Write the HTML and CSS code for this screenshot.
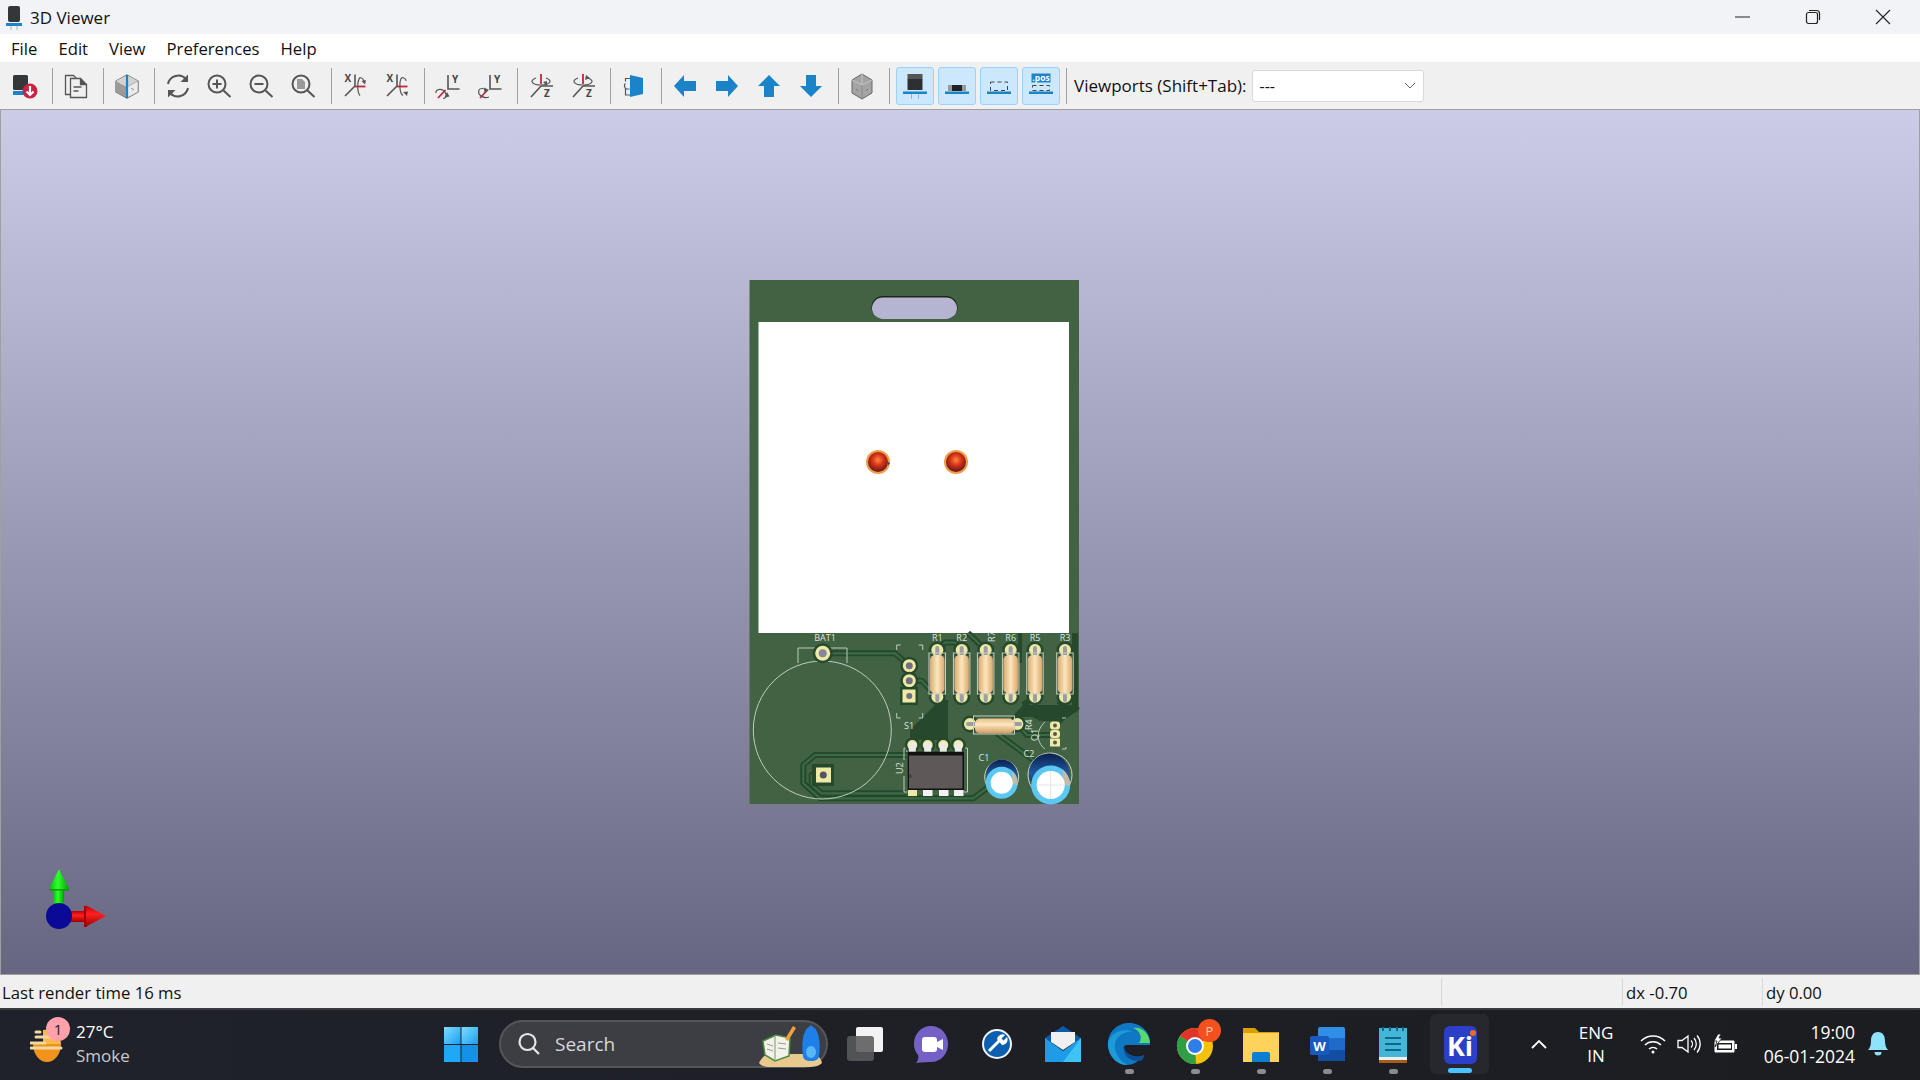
FILE: index.html
```html
<!DOCTYPE html>
<html lang="en">
<head>
<meta charset="utf-8">
<title>3D Viewer</title>
<link rel="stylesheet" href="styles.css">
</head>
<body>
<div class="window">
  <header class="titlebar">
    <svg class="app-icon" width="18" height="26" viewBox="0 0 18 26"><rect x="3" y="2" width="12" height="16" rx="2" fill="#33373a"/><rect x="1" y="19" width="16" height="3" fill="#1b83c8"/><path d="M6 22v4M12 22v4" stroke="#c5c8cc" stroke-width="1.5"/></svg>
    <span class="app-title">3D Viewer</span>
    <div class="win-controls">
      <div class="win-btn"><svg width="16" height="16" viewBox="0 0 16 16"><path d="M0 8h15" stroke="#222" stroke-width="1"/></svg></div>
      <div class="win-btn"><svg width="16" height="16" viewBox="0 0 16 16" fill="none" stroke="#222" stroke-width="1.2"><rect x="1.5" y="3.5" width="11" height="11" rx="2"/><path d="M4 1.5h7.5a3 3 0 0 1 3 3V11"/></svg></div>
      <div class="win-btn"><svg width="16" height="16" viewBox="0 0 16 16"><path d="M1 1l14 14M15 1L1 15" stroke="#222" stroke-width="1.1"/></svg></div>
    </div>
  </header>

  <nav class="menubar">
    <span>File</span><span>Edit</span><span>View</span><span>Preferences</span><span>Help</span>
  </nav>

  <div class="toolbar">
    <div class="tool"><svg class="ic" viewBox="0 0 28 28"><rect x="2" y="3" width="15" height="15" rx="1.5" fill="#33373a"/><rect x="2" y="19" width="17" height="4" fill="#1b83c8"/><circle cx="19" cy="19" r="7.5" fill="#c8233f"/><path d="M19 14v9M15.5 19.5L19 23l3.5-3.5" fill="none" stroke="#fff" stroke-width="2.2"/></svg></div>
    <i class="sep"></i>
    <div class="tool"><svg class="ic" viewBox="0 0 28 28" fill="none" stroke="#555" stroke-width="1.3"><path d="M8.5 22.5H3.5v-19h8l3 3"/><path d="M8.5 6.5h10l6 6v13h-16z" fill="#f0f0f0"/><path d="M18.5 6.5v6h6" fill="#555"/><path d="M11.5 15h8M11.5 19h5"/></svg></div>
    <i class="sep"></i>
    <div class="tool"><svg class="ic" viewBox="0 0 28 28"><path d="M14 3l11 6v11l-11 6-11-6V9z" fill="#f0f0f0" stroke="#666" stroke-width="1.2"/><path d="M3 9l11 6v11l-11-6z" fill="#9b9b9b"/><path d="M14 3L3 9l11 6 11-6z" fill="#d2d2d2"/><path d="M14 15l11-6v11l-11 6z" fill="#ececec" stroke="#888" stroke-width=".6"/><path d="M14 3v23" stroke="#1b83c8" stroke-width="2.2"/><path d="M18 16l3 2" stroke="#888"/></svg></div>
    <i class="sep"></i>
    <div class="tool"><svg class="ic" viewBox="0 0 28 28" fill="none" stroke="#555" stroke-width="2"><path d="M4 12A10.5 10.5 0 0 1 22 7"/><path d="M24 16A10.5 10.5 0 0 1 6 21"/><path d="M24 2.5v7.5h-7.5z" fill="#555" stroke="none"/><path d="M4 25.5V18h7.5z" fill="#555" stroke="none"/></svg></div>
    <div class="tool"><svg class="ic" viewBox="0 0 28 28" fill="none" stroke="#555" stroke-width="2"><circle cx="11" cy="12" r="8.5"/><path d="M17.5 18.5l7 6.5M11 7.5v9M6.5 12h9"/></svg></div>
    <div class="tool"><svg class="ic" viewBox="0 0 28 28" fill="none" stroke="#555" stroke-width="2"><circle cx="11" cy="12" r="8.5"/><path d="M17.5 18.5l7 6.5M6.5 12h9"/></svg></div>
    <div class="tool"><svg class="ic" viewBox="0 0 28 28" fill="none" stroke="#555" stroke-width="2"><circle cx="11" cy="12" r="8.5"/><path d="M17.5 18.5l7 6.5"/><path d="M7 7h5l3 3v7H7z" fill="#999" stroke="none"/></svg></div>
    <i class="sep"></i>
    <div class="tool"><svg class="ic" viewBox="0 0 28 28"><path d="M14 14V2.5M14 14L4 24" fill="none" stroke="#555" stroke-width="1.6"/><path d="M14 14.5h10.5" stroke="#c8233f" stroke-width="1.8"/><text x="3.5" y="10" class="axis">X</text><path d="M19 5.5C16 9 16 20 19 23.5" fill="none" stroke="#555" stroke-width="1.2"/><path d="M19 5.5C22 6 23 9 23 11" fill="none" stroke="#555" stroke-width="1.2"/><path d="M20.5 9l4.5-1-1 4.5z" fill="#555"/></svg></div>
    <div class="tool"><svg class="ic" viewBox="0 0 28 28"><path d="M14 14V2.5M14 14L4 24" fill="none" stroke="#555" stroke-width="1.6"/><path d="M14 14.5h10.5" stroke="#c8233f" stroke-width="1.8"/><text x="3.5" y="10" class="axis">X</text><path d="M20 23.5C16 21 16 8 19 5.5" fill="none" stroke="#555" stroke-width="1.2"/><path d="M19 5.5C22 6 23 8 23 9" fill="none" stroke="#555" stroke-width="1.2"/><path d="M20 20l5-.5-1 4.5z" fill="#555"/></svg></div>
    <i class="sep"></i>
    <div class="tool"><svg class="ic" viewBox="0 0 28 28"><path d="M14 3v14h11.5" fill="none" stroke="#555" stroke-width="1.6"/><path d="M11.5 18L4 26" stroke="#c8233f" stroke-width="1.8"/><text x="18" y="11" class="axis">Y</text><path d="M2 21C1 17 9 15 12 22c1 3-1 4.5-3 4.5" fill="none" stroke="#555" stroke-width="1.2"/><path d="M13 20l2.5 4.5-5 1z" fill="#555"/></svg></div>
    <div class="tool"><svg class="ic" viewBox="0 0 28 28"><path d="M14 3v14h11.5" fill="none" stroke="#555" stroke-width="1.6"/><path d="M11.5 18L4 26" stroke="#c8233f" stroke-width="1.8"/><text x="18" y="11" class="axis">Y</text><path d="M13 25C8 27 1 23 3 18c1-2 5-2 7 0" fill="none" stroke="#555" stroke-width="1.2"/><path d="M8 15.5l5 2.5-4.500 3z" fill="#555"/></svg></div>
    <i class="sep"></i>
    <div class="tool"><svg class="ic" viewBox="0 0 28 28"><path d="M14 14h12M14 14L4 25" fill="none" stroke="#555" stroke-width="1.6"/><path d="M14 2v10" stroke="#c8233f" stroke-width="1.8"/><text x="17" y="25" class="axis">Z</text><path d="M9 6c-8 3-3 7 5 7s13-4 5-7" fill="none" stroke="#555" stroke-width="1.2"/><path d="M16 10l4-1 0 5z" fill="#555"/></svg></div>
    <div class="tool"><svg class="ic" viewBox="0 0 28 28"><path d="M14 14h12M14 14L4 25" fill="none" stroke="#555" stroke-width="1.6"/><path d="M14 2v10" stroke="#c8233f" stroke-width="1.8"/><text x="17" y="25" class="axis">Z</text><path d="M9 6c-8 3-3 7 5 7s13-4 5-7" fill="none" stroke="#555" stroke-width="1.2"/><path d="M17 3l4 3-5 2z" fill="#555"/></svg></div>
    <i class="sep"></i>
    <div class="tool"><svg class="ic" viewBox="0 0 28 28"><path d="M10 6.5H5.500v3M5.500 17v6H10M5.500 11.500c-2 1-1 5 1 5.500h3" fill="none" stroke="#555" stroke-width="1.2"/><path d="M10 3l13 3v16l-13 3z" fill="#1b83c8"/></svg></div>
    <i class="sep"></i>
    <div class="tool"><svg class="ic" viewBox="0 0 28 28"><path class="arrow" d="M3 14L13 3v6h12v10H13v6z"/></svg></div>
    <div class="tool"><svg class="ic" viewBox="0 0 28 28"><path class="arrow" d="M25 14L15 3v6H3v10h12v6z"/></svg></div>
    <div class="tool"><svg class="ic" viewBox="0 0 28 28"><path class="arrow" d="M14 3L3 14h6v11h10V14h6z"/></svg></div>
    <div class="tool"><svg class="ic" viewBox="0 0 28 28"><path class="arrow" d="M14 25L3 14h6V3h10v11h6z"/></svg></div>
    <i class="sep"></i>
    <div class="tool"><svg class="ic" viewBox="0 0 28 28"><path d="M14 2l10 6v13l-10 6-10-6V8z" fill="#a4a4a4" stroke="#666" stroke-width="1"/><path d="M14 2v11M4 8l10 5 10-5" fill="none" stroke="#c4c4c4" stroke-width="1"/><path d="M14 13v14" stroke="#8a8a8a"/><path d="M8 17l2 2M20 17l-2 2" stroke="#777"/></svg></div>
    <i class="sep"></i>
    <div class="toggles">
      <div class="toggle"><svg class="ic" viewBox="0 0 28 28"><rect x="6.5" y="2" width="15" height="5" fill="#555"/><rect x="6.5" y="7" width="15" height="11" fill="#2d3033"/><rect x="2" y="19.500" width="24" height="2.500" fill="#1b83c8"/><path d="M10.500 22v5M17.500 22v5" stroke="#a8b0b8"/></svg></div>
      <div class="toggle"><svg class="ic" viewBox="0 0 28 28"><rect x="5" y="13" width="18" height="6" fill="#999"/><rect x="9" y="13" width="10" height="6" fill="#222"/><rect x="2" y="19.500" width="24" height="2.500" fill="#1b83c8"/></svg></div>
      <div class="toggle"><svg class="ic" viewBox="0 0 28 28"><rect x="5.500" y="10" width="17" height="8.500" fill="none" stroke="#444" stroke-dasharray="4 3"/><rect x="2" y="19.500" width="24" height="2.500" fill="#1b83c8"/></svg></div>
      <div class="toggle"><svg class="ic" viewBox="0 0 28 28"><rect x="4.500" y="1.500" width="19" height="9" fill="#1b83c8"/><text x="14" y="9" class="pos">.pos</text><rect x="5.500" y="13.500" width="17" height="5" fill="none" stroke="#444" stroke-dasharray="4 3"/><rect x="2" y="19.500" width="24" height="2.500" fill="#1b83c8"/></svg></div>
    </div>
    <i class="sep sep-last"></i>
    <label class="vp-label">Viewports (Shift+Tab):</label>
    <div class="combo"><span>---</span><svg width="12" height="8" viewBox="0 0 12 8"><path d="M1 1l5 5 5-5" fill="none" stroke="#666"/></svg></div>
  </div>

  <main class="viewport">
    <svg class="scene" viewBox="1 110 1918 864" preserveAspectRatio="none">
      <defs>
        <linearGradient id="res-v" x1="0" x2="1" y1="0" y2="0"><stop offset="0" stop-color="#d9aa70"/><stop offset=".5" stop-color="#fce6bd"/><stop offset="1" stop-color="#d8a76c"/></linearGradient>
        <linearGradient id="res-h" x1="0" x2="0" y1="0" y2="1"><stop offset="0" stop-color="#e7c08a"/><stop offset=".4" stop-color="#fce6bd"/><stop offset="1" stop-color="#d09c60"/></linearGradient>
        <radialGradient id="led" cx=".5" cy=".4" r=".62"><stop offset="0" stop-color="#ff8a3a"/><stop offset=".45" stop-color="#d8321a"/><stop offset="1" stop-color="#541816"/></radialGradient>
        <linearGradient id="gy" x1="0" x2="1" y1="0" y2="0"><stop offset="0" stop-color="#00c000"/><stop offset=".45" stop-color="#30ff30"/><stop offset="1" stop-color="#00a000"/></linearGradient>
        <linearGradient id="rx" x1="0" x2="0" y1="0" y2="1"><stop offset="0" stop-color="#c00000"/><stop offset=".4" stop-color="#ff2020"/><stop offset="1" stop-color="#a00000"/></linearGradient>
        <linearGradient id="navy" x1="0" x2="0" y1="0" y2="1"><stop offset="0" stop-color="#0a2150"/><stop offset=".5" stop-color="#2058a0"/><stop offset="1" stop-color="#0a1a40"/></linearGradient>
      </defs>

      <rect x="749.500" y="280" width="329.500" height="524" fill="#416344"/>
      <rect x="871.500" y="296" width="86" height="23" rx="11.500" fill="#1d2410"/>
      <rect x="872" y="297.500" width="85" height="21.500" rx="10.700" fill="#b5b5d1"/>
      <rect x="758.500" y="322" width="310.500" height="311" fill="#fff"/>

      <circle cx="878" cy="462" r="12" fill="#f59a48"/><circle cx="878" cy="462" r="10" fill="url(#led)"/><path d="M887 463.500h3M888.500 462v3" stroke="#555"/>
      <circle cx="956" cy="462" r="12" fill="#f59a48"/><circle cx="956" cy="462" r="10" fill="url(#led)"/>

      <!-- copper zones -->
      <g fill="#26492e">
        <path d="M938 702L910 730v10h33v-38z"/>
        <path d="M1023 705h55v6l-18 10h-20l-8-4h-20z"/>
        <path d="M1072 633h6v72h-6z"/>
        <path d="M1018 633h4v30h-4z"/>
      </g>
      <!-- traces -->
      <g fill="none" stroke="#26492e" stroke-width="6" stroke-linejoin="round">
        <path d="M822.700 653.300H895l14.300 12.400"/>
        <path d="M909.300 680.700h12.400l15.300 16"/>
        <path d="M937 650l8-7.500h10l6.700 7.500"/>
        <path d="M968 633l17.700 17"/>
        <path d="M906.700 755H815l-11.700 10v18.300L820 798.300h153.300l20-15"/>
        <path d="M823.300 775h-11.600v10l10 8.300H906"/>
        <path d="M996.700 733l43.300 32"/>
        <path d="M1017 724l10 11h23"/>
        <path d="M1055 726l7-8 16-12"/>
        <path d="M961.700 697l-6 5M1035 697l-12 8M1065 697l-6 8"/>
        <path d="M945 700v45"/>
      </g>
      <g fill="none" stroke="#3a6b44" stroke-width="2.200" stroke-linejoin="round">
        <path d="M822.700 653.300H895l14.300 12.400"/>
        <path d="M909.300 680.700h12.400l15.300 16"/>
        <path d="M937 650l8-7.500h10l6.700 7.500"/>
        <path d="M968 633l17.700 17"/>
        <path d="M906.700 755H815l-11.700 10v18.300L820 798.300h153.300l20-15"/>
        <path d="M823.300 775h-11.600v10l10 8.300H906"/>
        <path d="M996.700 733l43.300 32"/>
        <path d="M1017 724l10 11h23"/>
      </g>

      <!-- silk -->
      <g class="silk-line">
        <circle cx="822.300" cy="730" r="69"/>
        <path d="M798 663v-15h49v15"/>
        <path d="M896.700 650v-5h4M918.700 645h4v5M896.700 713v5h4M918.700 718h4v-5"/>
        <path d="M907 752v-4h-3v12M904 776v16h3M964 748h3.500v44H964"/>
        <path d="M1045 722c-9 8-9 20 0 27"/>
        <path d="M1062 718h4M1062 749h4v-2"/>
      </g>
      <g class="silk-text">
        <text x="825" y="641" text-anchor="middle">BAT1</text>
        <text x="909" y="729" text-anchor="middle">S1</text>
        <text x="937.300" y="641" text-anchor="middle">R1</text>
        <text x="961.700" y="641" text-anchor="middle">R2</text>
        <text x="1010.700" y="641" text-anchor="middle">R6</text>
        <text x="1035" y="641" text-anchor="middle">R5</text>
        <text x="1065" y="641" text-anchor="middle">R3</text>
        <text x="984" y="761" text-anchor="middle">C1</text>
        <text x="1029" y="756.500" text-anchor="middle">C2</text>
        <text transform="translate(995 642) rotate(-90)">R7</text>
        <text transform="translate(1032 730) rotate(-90)">R4</text>
        <text transform="translate(1038 741) rotate(-90)">Q1</text>
        <text transform="translate(902.500 774) rotate(-90)">U2</text>
      </g>

      <!-- battery pads -->
      <circle cx="822.700" cy="653.300" r="10" fill="#26492e"/><circle cx="822.700" cy="653.300" r="7.500" fill="#efe9a6"/><circle cx="822.700" cy="653.300" r="4" fill="#85859b"/>
      <rect x="812" y="764" width="22" height="22" fill="#26492e"/><rect x="816" y="767.500" width="15" height="15" fill="#efe9a6"/><circle cx="823.300" cy="775" r="3.500" fill="#555563"/>

      <!-- S1 pads -->
      <circle cx="909.300" cy="665.700" r="9" fill="#26492e"/><circle cx="909.300" cy="665.700" r="6.500" fill="#efe9a6"/><circle cx="909.300" cy="665.700" r="3.500" fill="#707085"/>
      <circle cx="909.300" cy="680.700" r="9" fill="#26492e"/><circle cx="909.300" cy="680.700" r="6.500" fill="#efe9a6"/><circle cx="909.300" cy="680.700" r="3.500" fill="#707085"/>
      <rect x="900" y="687" width="18" height="18" fill="#26492e"/><rect x="902.500" y="689.500" width="13" height="13" fill="#efe9a6"/><circle cx="909.300" cy="696" r="3" fill="#707085"/>

      <!-- vertical resistors -->
      <g id="rv">
        <circle cx="937.300" cy="650" r="8.500" fill="#26492e"/><circle cx="937.300" cy="650" r="6" fill="#efe9a6"/><circle cx="937.300" cy="696.700" r="8.500" fill="#26492e"/><circle cx="937.300" cy="696.700" r="6" fill="#efe9a6"/>
        <path d="M937.300 648v52" stroke="#9c9ca4" stroke-width="4" stroke-linecap="round"/>
        <rect x="929" y="653" width="16.500" height="41" fill="none" stroke="#c8ccc4" stroke-width="1"/>
        <rect x="930" y="655" width="14.500" height="38.500" rx="5" fill="url(#res-v)"/>
      </g>
      <use href="#rv" x="24.400"/><use href="#rv" x="48.400"/><use href="#rv" x="73.400"/><use href="#rv" x="97.700"/><use href="#rv" x="127.700"/>

      <!-- horizontal resistor -->
      <circle cx="970" cy="724" r="8.500" fill="#26492e"/><circle cx="970" cy="724" r="6" fill="#efe9a6"/><circle cx="1017.300" cy="724" r="8.500" fill="#26492e"/><circle cx="1017.300" cy="724" r="6" fill="#efe9a6"/>
      <path d="M968 724h52" stroke="#9c9ca4" stroke-width="4" stroke-linecap="round"/>
      <rect x="973.500" y="716" width="41" height="18" fill="none" stroke="#c8ccc4"/>
      <rect x="975" y="718.500" width="39" height="15" rx="5" fill="url(#res-h)"/>

      <!-- Q1 -->
      <rect x="1050" y="721.500" width="10" height="8" rx="3" fill="#efe9a6"/><circle cx="1055" cy="725.500" r="2" fill="#555"/>
      <rect x="1050" y="730" width="10" height="8" rx="3" fill="#efe9a6"/><circle cx="1055" cy="734" r="2" fill="#555"/>
      <rect x="1050" y="738.500" width="10" height="8" fill="#efe9a6"/><circle cx="1055" cy="742.500" r="2" fill="#555"/>

      <!-- U2 -->
      <g id="upin"><circle cx="912.300" cy="745" r="7.500" fill="#26492e"/><circle cx="912.300" cy="745" r="5" fill="#efe9a6"/><path d="M908.800 752v-8l3.500-2.500 3.500 2.500v8z" fill="#ecece6"/></g>
      <use href="#upin" x="15.400"/><use href="#upin" x="31"/><use href="#upin" x="46"/>
      <rect x="907.700" y="751.700" width="56.300" height="38.300" fill="#111"/>
      <rect x="909" y="755.500" width="53.500" height="33" fill="#5e5858"/>
      <path d="M908 778l3-1-1-3" fill="none" stroke="#222" stroke-width=".8"/>
      <rect x="908" y="790" width="9" height="6" fill="#efe9a6"/><rect x="923" y="790" width="9.500" height="6" fill="#f2f2f2"/><rect x="939" y="790" width="9.500" height="6" fill="#f2f2f2"/><rect x="954" y="790" width="9.500" height="6" fill="#f2f2f2"/>

      <!-- C1 -->
      <circle cx="1001.700" cy="777" r="17" fill="none" stroke="#d0d4cc"/>
      <circle cx="1001.700" cy="775" r="15.500" fill="url(#navy)"/>
      <circle cx="1001.700" cy="782.700" r="16" fill="#5cc8f2"/>
      <path d="M1012 771a16 16 0 0 1 5.500 14l-5-1z" fill="#c2bba8"/>
      <circle cx="1001.700" cy="782.700" r="11" fill="#fff"/>
      <!-- C2 -->
      <circle cx="1050" cy="775" r="22" fill="none" stroke="#d0d4cc"/>
      <circle cx="1049" cy="773.500" r="20" fill="url(#navy)"/>
      <circle cx="1050.700" cy="785" r="19.500" fill="#5cc8f2"/>
      <path d="M1062 769a19.500 19.500 0 0 1 8 17l-6-1z" fill="#c2bba8"/>
      <circle cx="1050.700" cy="785" r="14" fill="#fff"/>
      <path d="M1050.700 771v28M1036.700 785h28" stroke="#dfe6ea" stroke-width="1"/>

      <!-- axis gizmo -->
      <rect x="53" y="887" width="11" height="17" fill="url(#gy)"/>
      <path d="M49 888.500h20v2H49z" fill="#00a000"/>
      <path d="M59 869l10 20H49z" fill="url(#gy)"/>
      <rect x="70" y="911" width="16" height="11" fill="url(#rx)"/>
      <path d="M84 906h3v21h-3z" fill="#a00000"/>
      <path d="M106 916l-20 10.500v-21z" fill="url(#rx)"/>
      <circle cx="59" cy="916" r="13" fill="#0a0a96"/>
    </svg>
  </main>

  <footer class="statusbar">
    <span class="st-main">Last render time 16 ms</span>
    <span class="st-cell st-blank"></span>
    <span class="st-cell st-dx">dx -0.70</span>
    <span class="st-cell st-dy">dy 0.00</span>
  </footer>

  <div class="taskbar">
    <div class="weather">
      <div class="weather-icon">
        <svg width="34" height="38" viewBox="0 0 34 38"><path d="M3 19a14 18 0 0 0 28 0z" fill="#f0921c"/><path d="M13 5a15 15 0 0 1 18 14H13z" fill="#f7b94a"/><path d="M6 7h4M6 12h22M1 18h14M1 23h30" stroke="#f2d8a0" stroke-width="3" stroke-linecap="round"/></svg>
        <span class="badge">1</span>
      </div>
      <div class="weather-text"><span>27°C</span><span class="dim">Smoke</span></div>
    </div>
    <svg class="start" width="34" height="35" viewBox="0 0 34 35"><defs><linearGradient id="w1" x1="0" y1="0" x2="1" y2="1"><stop offset="0" stop-color="#7fdcff"/><stop offset="1" stop-color="#1a9ff0"/></linearGradient></defs><rect width="16.500" height="17" fill="url(#w1)"/><rect x="17.500" width="16.500" height="17" fill="url(#w1)"/><rect y="18" width="16.500" height="17" fill="#1fa8f5"/><rect x="17.500" y="18" width="16.500" height="17" fill="#1492e8"/></svg>
    <div class="search">
      <svg width="26" height="26" viewBox="0 0 26 26" fill="none" stroke="#e6e6e6" stroke-width="2.200"><circle cx="11.500" cy="11" r="8"/><path d="M17 17l6 6"/></svg>
      <span>Search</span>
      <svg class="search-art" width="66" height="48" viewBox="0 0 66 48"><path d="M2 44c4-8 8-9 14-9h40c4 0 8 4 9 9-3 3-8 4-12 4H14C8 48 4 47 2 44z" fill="#e8c98e"/><path d="M6 22l13-6 14 3-1 18-14 5-10-6z" fill="#f2f2e8" stroke="#4b8a3e" stroke-width="1.500"/><path d="M18 16v26" stroke="#7a9a70"/><path d="M10 25l6 2M10 30l6 2M21 24l8 1M21 29l8 1" stroke="#999"/><path d="M28 20l8-13 3 2-8 13z" fill="#f2a03c"/><path d="M46 37c-2-12 0-26 6-29 1-2 3-2 4 0 6 3 8 17 6 29 0 3-3 5-8 5s-8-2-8-5z" fill="#1f7fe8"/><ellipse cx="54" cy="33" rx="5" ry="6" fill="#58b8f6"/></svg>
    </div>
    <div class="apps">
      <div class="app"><svg width="40" height="40" viewBox="0 0 40 40"><rect x="11" y="3" width="27" height="25" rx="2" fill="#f2f2f2"/><rect x="2" y="12" width="27" height="25" rx="3" fill="#5a5a5c" fill-opacity=".88"/></svg></div>
      <div class="app"><svg width="40" height="40" viewBox="0 0 40 40"><path d="M20 2c10 0 17 8 17 18s-7 18-17 18c-3 0-8 0-15 1 2-3 3-5 2-8C4 27 3 24 3 20 3 10 10 2 20 2z" fill="#7561c5"/><rect x="11" y="13" width="15" height="15" rx="3" fill="#fff"/><path d="M26 18l6-3v11l-6-3z" fill="#fff"/></svg></div>
      <div class="app"><svg width="40" height="40" viewBox="0 0 40 40"><circle cx="20" cy="20" r="14" fill="#0c5fb0" stroke="#f2f6fa" stroke-width="2"/><path d="M12 27l11-11" stroke="#fff" stroke-width="3"/><path d="M20 15a5.500 5.500 0 0 1 8-4l-3.500 3.500 2 2L30 13a5.500 5.500 0 0 1-5 8" fill="#fff"/></svg></div>
      <div class="app"><svg width="40" height="40" viewBox="0 0 40 40"><path d="M2 14L20 2l18 12v5H2z" fill="#0a5cab"/><path d="M8 8h24v10L20 26 8 18z" fill="#f0f0f0"/><path d="M2 14l18 13 18-13v24H2z" fill="#1f9be8"/><path d="M38 14v24H20z" fill="#3dc4f5"/></svg></div>
      <div class="app"><svg width="44" height="44" viewBox="0 0 44 44"><path d="M22 1c13 0 21 10 21 19v3H20c-4 0-4 4-1 7 5 5 13 6 18 3-5 7-12 10-17 10C9 43 1 33 1 22 1 9 11 1 22 1z" fill="#0f78c4"/><path d="M43 22C43 12 35 4 26 6c7 2 10 10 6 15h11z" fill="#5ad86f"/><path d="M1 20C5 9 18 6 26 10c-8-1-16 3-18 11-1 6 1 15 12 22C9 43 0 32 1 20z" fill="#1d9bd8"/><path d="M17 25c-1 7 4 14 14 14 3 0 6-1 6-6-5 3-13 2-18-3z" fill="#0a4f96"/></svg></div>
      <div class="app"><svg width="44" height="44" viewBox="0 0 44 44"><g transform="translate(2 0)"><circle cx="20" cy="24" r="18" fill="#f4c20d"/><path d="M20 24L5 14A18 18 0 0 1 35 14z" fill="#e0352b"/><path d="M20 24L5 14A18 18 0 0 0 21 42z" fill="#2f9e44"/><circle cx="20" cy="24" r="9" fill="#fff"/><circle cx="20" cy="24" r="7" fill="#2f7de8"/></g></svg><span class="chrome-p">P</span></div>
      <div class="app"><svg width="40" height="40" viewBox="0 0 40 40"><path d="M2 4h12l4 4h20v30H2z" fill="#d9a000"/><rect x="2" y="9" width="36" height="29" fill="#fdd35a"/><path d="M11 38V30a2 2 0 0 1 2-2h14a2 2 0 0 1 2 2v8z" fill="#0d7fd0"/></svg></div>
      <div class="app"><svg width="40" height="40" viewBox="0 0 40 40"><rect x="11" y="3" width="27" height="34" rx="2" fill="#2f8fe6"/><rect x="11" y="14" width="27" height="12" fill="#1e6cc8"/><rect x="11" y="26" width="27" height="11" fill="#124ea3"/><rect x="3" y="12" width="19" height="19" rx="2" fill="#185abd"/><text x="12.500" y="26.500" class="word-w">W</text></svg></div>
      <div class="app"><svg width="40" height="40" viewBox="0 0 40 40"><rect x="6" y="4" width="28" height="30" fill="#44b6d8"/><rect x="6" y="33" width="28" height="3" fill="#eee"/><rect x="6" y="36" width="28" height="3" fill="#a85a1a"/><path d="M10 3v4M17 3v4M24 3v4M30 3v4" stroke="#0b6a88" stroke-width="2"/><path d="M12 14h16M12 20h16M12 26h16" stroke="#0b6a88" stroke-width="2"/></svg></div>
      <div class="app app-active"><svg width="40" height="42" viewBox="0 0 40 42"><rect x="4" y="3" width="33" height="38" rx="6" fill="#2b3fc9"/><circle cx="33" cy="10" r="3" fill="#f06a1c"/><text x="20" y="33" class="ki">Ki</text></svg></div>
    </div>
    <div class="tray">
      <svg class="tr-chev" width="24" height="14" viewBox="0 0 24 14"><path d="M5 11l7-7 7 7" fill="none" stroke="#fff" stroke-width="1.800"/></svg>
      <div class="tr-lang"><span>ENG</span><span>IN</span></div>
      <svg class="tr-wifi" width="26" height="22" viewBox="0 0 26 22" fill="none" stroke="#fff" stroke-width="1.500"><path d="M1 8a17 17 0 0 1 24 0M5 12a11.500 11.500 0 0 1 16 0M9 16a6 6 0 0 1 8 0"/><circle cx="13" cy="19" r="1.500" fill="#fff" stroke="none"/></svg>
      <svg class="tr-sound" width="26" height="22" viewBox="0 0 26 22" fill="none" stroke="#fff" stroke-width="1.300"><path d="M2 7.500h4L12 3v16l-6-4.500H2z"/><path d="M15 7.500a5 5 0 0 1 0 7M18 5a9 9 0 0 1 0 12M21 2.500a13 13 0 0 1 0 17"/></svg>
      <svg class="tr-batt" width="26" height="22" viewBox="0 0 26 22"><path d="M3 8h19v11H3z" fill="#fff" stroke="#fff"/><path d="M5 10h15v7H5z" fill="#1c1d21"/><path d="M6.500 11.500H19v4H6.500z" fill="#fff"/><rect x="23" y="11" width="2" height="5" fill="#fff"/><path d="M6 1L2 8h3l-2 6 7-9H7l2-4z" fill="#fff" stroke="#1c1d21" stroke-width=".8"/></svg>
      <div class="tr-clock"><span>19:00</span><span>06-01-2024</span></div>
      <svg class="tr-bell" width="24" height="26" viewBox="0 0 24 26"><path d="M12 1c5 0 7 4 7 9 0 4 1 7 3 9H2c2-2 3-5 3-9 0-5 2-9 7-9z" fill="#8fe2fb"/><path d="M8.500 21h7a3.500 3.500 0 0 1-7 0z" fill="#8fe2fb"/></svg>
    </div>
  </div>
</div>
</body>
</html>
```

FILE: styles.css
```css
* { box-sizing: border-box; }
html, body { margin: 0; height: 100%; overflow: hidden; }
body { font-family: "Open Sans", "Liberation Sans", sans-serif; font-size: 15px; color: #111; }
.window { width: 1920px; height: 1080px; display: flex; flex-direction: column; }

.titlebar { height: 34px; flex: none; background: #f1f3f6; display: flex; align-items: center; padding: 0 2px 0 5px; }
.app-icon { margin-right: 7px; flex: none; }
.app-title { font-size: 17px; padding-top: 1px; }
.win-controls { margin-left: auto; display: flex; }
.win-btn { width: 70px; height: 34px; display: flex; align-items: center; justify-content: center; }

.menubar { height: 28px; flex: none; background: #fff; display: flex; align-items: center; gap: 21px; padding: 1px 0 0 11px; font-size: 16.700px; }

.toolbar { height: 47px; flex: none; background: #f0f0f0; display: flex; align-items: center; padding-left: 4px; }
.tool { width: 42px; height: 38px; flex: none; display: flex; align-items: center; justify-content: center; }
.ic { width: 28px; height: 28px; display: block; }
.sep { width: 1px; height: 36px; background: #a0a0a0; margin: 0 2px 0 6px; flex: none; }
.sep-last { margin: 0 7px 0 6px; }
.toggles { display: flex; gap: 4px; margin-left: 4px; }
.toggle { width: 38px; height: 38px; background: #cce8ff; border: 1px solid #99d1ff; border-radius: 3px; display: flex; align-items: center; justify-content: center; }
.axis { font: 700 10px "Open Sans", sans-serif; fill: #444; }
.pos { font: 700 8.500px "Open Sans", sans-serif; fill: #fff; text-anchor: middle; }
.arrow { fill: #1b83c8; }
.vp-label { font-size: 17px; white-space: nowrap; flex: none; }
.combo { width: 172px; height: 32px; margin-left: 5px; flex: none; background: #fff; border: 1px solid #d9d9d9; border-radius: 3px; display: flex; align-items: center; justify-content: space-between; padding: 0 7px; font-size: 16px; }

.viewport { flex: 1; min-height: 0; border: 1px solid #a0a0a0; background: linear-gradient(#cccce6, #666680); }
.scene { display: block; width: 100%; height: 100%; }
.silk-line { fill: none; stroke: #cfd6cc; stroke-width: .9; }
.silk-text { font: 9px "Open Sans", sans-serif; fill: #dfe3da; }

.statusbar { height: 33px; flex: none; background: #f0f0f0; display: flex; align-items: center; padding-top: 1px; font-size: 16.700px; }
.st-main { width: 1441px; padding-left: 2px; }
.st-cell { height: 28px; border-left: 1px solid #d8d8d8; display: flex; align-items: center; padding-left: 3px; }
.st-blank { width: 181px; }
.st-dx { width: 140px; }
.st-dy { width: 158px; }

.taskbar { height: 72px; flex: none; background: linear-gradient(90deg, #20222b, #1c1d21); border-top: 2px solid #3a3b40; padding-bottom: 2px; display: flex; align-items: center; color: #fff; }
.weather { width: 414px; margin-left: 30px; flex: none; display: flex; align-items: center; gap: 12px; }
.weather-icon { position: relative; width: 34px; height: 38px; }
.weather-icon svg { display: block; }
.badge { position: absolute; left: 16px; top: -8px; width: 24px; height: 24px; border-radius: 50%; background: #ffa0ab; color: #2a1a1e; font-size: 15px; display: flex; align-items: center; justify-content: center; }
.weather-text { display: flex; flex-direction: column; font-size: 17px; line-height: 24px; }
.dim { color: #c9c9c9; }
.start { flex: none; }
.search { position: relative; width: 329px; height: 48px; margin-left: 21px; flex: none; background: #3d3e44; border: 2px solid #55565c; border-radius: 24px; display: flex; align-items: center; padding-left: 15px; gap: 13px; font-size: 19px; color: #d8d8d8; }
.search-art { position: absolute; right: 3px; bottom: -1px; }
.apps { display: flex; margin-left: 4px; flex: none; }
.app { position: relative; width: 66px; height: 60px; display: flex; align-items: center; justify-content: center; }
.app:nth-child(5)::after, .app:nth-child(6)::after, .app:nth-child(7)::after, .app:nth-child(8)::after, .app:nth-child(9)::after { content: ""; position: absolute; left: 29px; bottom: 0; width: 9px; height: 5px; border-radius: 3px; background: #8b8b90; }
.app-active { background: #27282e; border-radius: 6px; width: 59px; margin: 0 3px 0 4px; }
.app-active::after { content: ""; position: absolute; left: 18px; bottom: 1px; width: 24px; height: 5px; border-radius: 3px; background: #4cc2ff; }
.chrome-p { position: absolute; left: 36px; top: 5px; width: 23px; height: 23px; border-radius: 50%; background: #f4511e; color: #f7c9b5; font-size: 13px; display: flex; align-items: center; justify-content: center; }
.word-w { font: 700 13px "Open Sans", sans-serif; fill: #fff; text-anchor: middle; }
.ki { font: 700 27px "Open Sans", sans-serif; fill: #fff; text-anchor: middle; }
.tray { display: flex; align-items: center; flex: none; }
.tr-chev { margin-left: 35px; }
.tr-lang { width: 50px; margin-left: 20px; display: flex; flex-direction: column; align-items: center; font-size: 17px; line-height: 23px; }
.tr-wifi { margin-left: 19px; }
.tr-sound, .tr-batt { margin-left: 10px; }
.tr-clock { width: 100px; margin-left: 17px; display: flex; flex-direction: column; align-items: flex-end; font-size: 17.500px; line-height: 24px; white-space: nowrap; }
.tr-bell { margin-left: 11px; }
```
